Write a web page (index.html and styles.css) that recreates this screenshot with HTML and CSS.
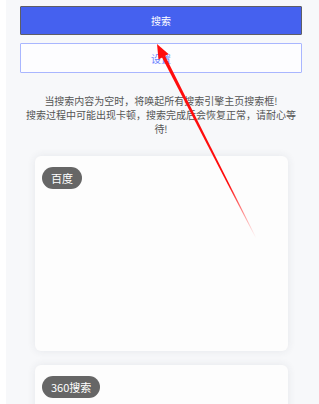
FILE: index.html
```html
<!DOCTYPE html>
<html lang="zh">
<head>
<meta charset="utf-8">
<link rel="stylesheet" href="styles.css">
</head>
<body>
<div class="page">
  <button class="btn btn-primary">搜索</button>
  <button class="btn btn-outline">设置</button>
  <p class="tip">当搜索内容为空时，将唤起所有搜索引擎主页搜索框!<br>搜索过程中可能出现卡顿，搜索完成后会恢复正常，请耐心等待!</p>
  <div class="cards">
    <div class="card"><span class="badge">百度</span></div>
    <div class="card"><span class="badge">360搜索</span></div>
  </div>
</div>
<svg class="arrow" width="319" height="404" viewBox="0 0 319 404">
  <defs>
    <linearGradient id="fade" gradientUnits="userSpaceOnUse" x1="157" y1="44" x2="256" y2="238">
      <stop offset="0" stop-color="#ff0d0d"/>
      <stop offset="0.72" stop-color="#ff0d0d"/>
      <stop offset="1" stop-color="#ff0d0d" stop-opacity="0"/>
    </linearGradient>
  </defs>
  <polygon points="157,44 168.5,54 158.5,59.5" fill="#ff0d0d"/>
  <polygon points="164.9,55.6 161.9,57.2 255.7,238.2 256.3,237.8" fill="url(#fade)"/>
</svg>
</body>
</html>
```
FILE: styles.css
```css
html, body {
  margin: 0;
  padding: 0;
}
body {
  background: #fff;
  font-family: "Noto Sans CJK SC", "Noto Sans", sans-serif;
  width: 319px;
  height: 404px;
  overflow: hidden;
  position: relative;
}
.page {
  margin-left: 6px;
  background: #f7f8fa;
  height: 404px;
  overflow: hidden;
  padding: 6px 17px 0 14px;
  display: flex;
  flex-direction: column;
  box-sizing: border-box;
}
.btn {
  display: block;
  width: 100%;
  flex-shrink: 0;
  font-family: inherit;
  font-size: 10px;
  box-sizing: border-box;
  margin: 0;
  padding: 0;
  border-radius: 1px;
}
.btn-primary {
  height: 29px;
  background: #4561ef;
  color: #fff;
  border: 1px solid #5e5e66;
}
.btn-outline {
  height: 30px;
  margin-top: 8px;
  background: #fdfdff;
  color: #6a82ff;
  border: 1px solid #a9b6ff;
}
.tip {
  margin: 21px 0 0;
  padding: 0 4px;
  font-size: 10px;
  line-height: 14px;
  color: #555;
  text-align: center;
  flex-shrink: 0;
}
.cards {
  margin: 20px 14px 0 15px;
  display: flex;
  flex-direction: column;
  gap: 14px;
}
.card {
  height: 195px;
  background: #fdfdfd;
  border-radius: 6px;
  box-shadow: 0 0 9px rgba(40, 50, 80, 0.09);
  padding: 8px 7px;
  box-sizing: border-box;
  flex-shrink: 0;
}
.badge {
  display: inline-block;
  height: 22px;
  line-height: 22px;
  padding: 0 9px;
  border-radius: 11px;
  background: #666;
  color: #fff;
  font-size: 11px;
}
.arrow {
  position: absolute;
  left: 0;
  top: 0;
  pointer-events: none;
}
```
